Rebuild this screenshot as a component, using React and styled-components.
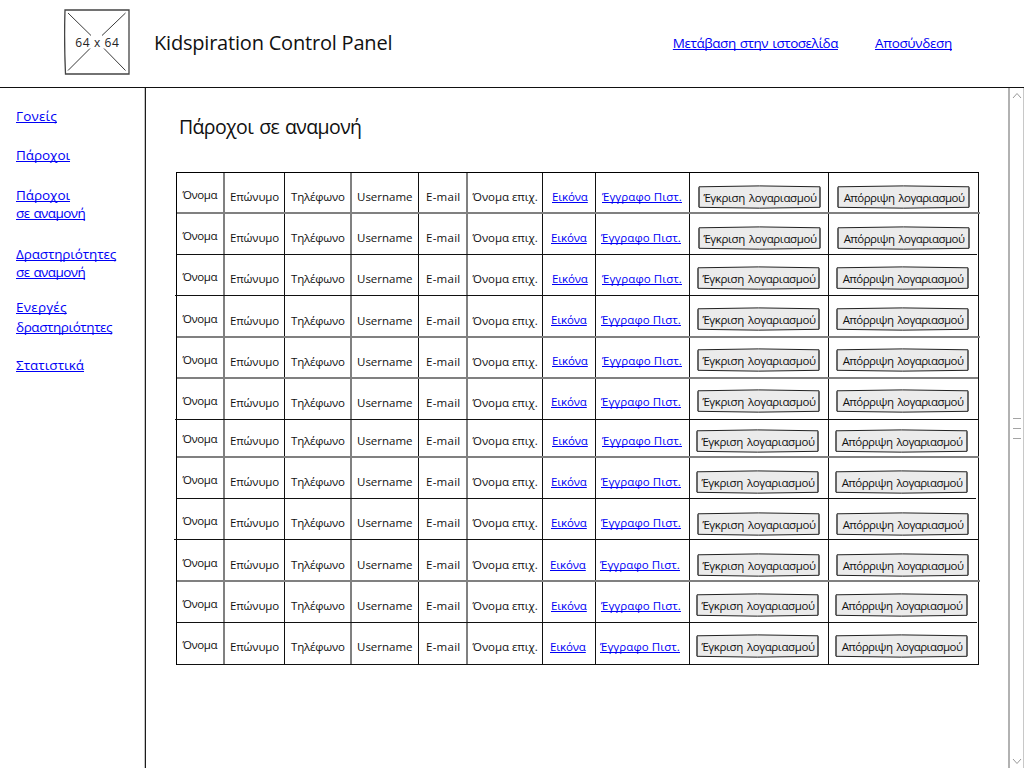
import React from 'react';
import styled, { createGlobalStyle } from 'styled-components';

const GlobalStyle = createGlobalStyle`
  * { box-sizing: border-box; }
  html, body { margin: 0; background: #fff; overflow: hidden; }
  body { font-family: "Open Sans", "Noto Sans", sans-serif; color: #111; }
`;

const Page = styled.div`
  width: 1024px;
  height: 768px;
  display: flex;
  flex-direction: column;
`;

const Header = styled.header`
  height: 88px;
  flex: none;
  display: flex;
  align-items: flex-start;
  padding: 9px 72px 0 64px;
  border-bottom: 1px solid #111;
`;

const Logo = styled.svg`
  flex: none;
  width: 66px;
  height: 66px;
`;

const Title = styled.h1`
  margin: 20px 0 0 24px;
  font-size: 20px;
  line-height: 28px;
  font-weight: 400;
  letter-spacing: -0.2px;
  white-space: nowrap;
`;

const TopLinks = styled.nav`
  display: flex;
  gap: 37px;
  margin: 25px 0 0 auto;
`;

const Link = styled.a`
  color: #0000f5;
  text-decoration: underline;
  text-decoration-thickness: 1px;
  text-underline-offset: 1px;
  text-decoration-skip-ink: none;
  white-space: nowrap;
  letter-spacing: ${(p) => p.$track || 0}px;
`;

const MenuLink = styled(Link)`
  font-size: 13.5px;
  line-height: 18px;
  word-spacing: 1px;
`;

const Body = styled.div`
  flex: 1;
  min-height: 0;
  display: flex;
`;

const Sidebar = styled.aside`
  width: 146px;
  flex: none;
  padding: 19px 0 0 16px;
  border-right: 1px solid #1c1c1c;
  box-shadow: inset -1px 0 0 #c4c4c4;
`;

const MenuItem = styled.div`
  display: flex;
  flex-direction: column;
  align-items: flex-start;
  margin-bottom: ${(p) => p.$gap}px;

  ${MenuLink} { line-height: ${(p) => p.$line || 18}px; }
`;

const Main = styled.main`
  flex: 1;
  padding: 26px 0 0 30px;
`;

const Heading = styled.h2`
  margin: 0 0 32px 3px;
  font-size: 19.5px;
  line-height: 26px;
  font-weight: 400;
  letter-spacing: -0.62px;
  word-spacing: 1.5px;
`;

const Table = styled.div`
  width: 803px;
  border: solid #000;
  border-width: 1px 0 0 1px;
`;

const Row = styled.div`
  position: relative;
  display: grid;
  grid-template-columns: 48px 60px 67px 67px 49px 75px 53px 94px 139px 150px;
  height: ${(p) => p.$height}px;

  &::after {
    content: "";
    position: absolute;
    bottom: 0;
    left: ${(p) => -p.$left}px;
    right: ${(p) => -p.$right}px;
    height: ${(p) => (p.$soft ? 2 : 1)}px;
    background: ${(p) => (p.$soft ? '#808080' : '#111')};
  }
`;

const Cell = styled.div`
  display: flex;
  align-items: flex-start;
  padding: ${(p) => p.$top}px 0 0 ${(p) => p.$left}px;
  border-right: ${(p) => (p.$soft ? '2px solid #808080' : '1px solid #111')};
  font-size: 11.5px;
  line-height: 16px;
  letter-spacing: ${(p) => p.$track || 0}px;
  white-space: nowrap;
  min-width: 0;
`;

const SketchButton = styled.button`
  position: relative;
  flex: none;
  width: ${(p) => p.$width}px;
  height: 24px;
  padding: 2px 0 0 1px;
  border: 0;
  background: none;
  color: #111;
  font: 11.5px/18px "Open Sans", "Noto Sans", sans-serif;
  letter-spacing: ${(p) => p.$track}px;
  word-spacing: 1.5px;
  text-align: center;
  white-space: nowrap;

  svg { position: absolute; inset: 0; }
  span { position: relative; }
`;

const Scrollbar = styled.div`
  width: 16px;
  flex: none;
  display: flex;
  flex-direction: column;
  justify-content: space-between;
  align-items: center;
  padding: 4px 0 3px;
  border-left: 2px solid #b2b2b2;
  border-right: 1px solid #c8c8c8;
`;

const Arrow = styled.svg`
  width: 10px;
  height: 7px;
`;

const Grip = styled.div`
  display: flex;
  flex-direction: column;
  gap: 9px;
  width: 8px;
  i { height: 1px; background: #a4a4a4; }
`;

const columns = [
  { text: 'Όνομα', left: 5.5, track: -0.4, lift: 2, soft: true },
  { text: 'Επώνυμο', left: 5, track: -0.15 },
  { text: 'Τηλέφωνο', left: 6, track: -0.2, soft: true },
  { text: 'Username', left: 5, track: 0 },
  { text: 'E-mail', left: 7, track: 0.25, soft: true },
  { text: 'Όνομα επιχ.', left: 4.5, track: -0.05 },
  { text: 'Εικόνα', left: 9, track: -0.12, link: true },
  { text: 'Έγγραφο Πιστ.', left: 6, track: 0.08, link: true },
  { text: 'Έγκριση λογαριασμού', left: 8, track: -0.39, button: 123 },
  { text: 'Απόρριψη λογαριασμού', left: 8, track: -0.54, button: 133 },
];

const rows = [
  { h: 41, text: 16, btn: 12, link: 0, shift: 0, soft: true, left: 0, right: 1 },
  { h: 41, text: 16, btn: 12, link: -1, shift: 0, left: 0, right: -2 },
  { h: 41, text: 16, btn: 11, link: 0, shift: -1, left: 2, right: 0 },
  { h: 42, text: 17, raise: 1, btn: 11, link: -1, shift: -1, soft: true, left: 0, right: 1 },
  { h: 41, text: 16, raise: 1, btn: 10, link: 0, shift: -1, soft: true, left: 0, right: -1 },
  { h: 41, text: 16, raise: 1, btn: 10, link: -1, shift: -1, left: 2, right: 0 },
  { h: 38, text: 13, btn: 9, link: 0, shift: -2, soft: true, left: 0, right: 0 },
  { h: 41, text: 16, btn: 12, link: -1, shift: -2, left: 0, right: -3 },
  { h: 41, text: 16, btn: 13, link: -1, shift: -1, left: 3, right: 0 },
  { h: 42, text: 17, btn: 13, link: -2, shift: -1, soft: true, left: 0, right: 1 },
  { h: 41, text: 16, btn: 11, link: -1, shift: -2, left: 0, right: -2 },
  { h: 42, text: 16, btn: 11, link: -2, shift: -2, left: 0, right: 0 },
];

const menu = [
  { gap: 21, lines: [['Γονείς', 0.16]] },
  { gap: 22, lines: [['Πάροχοι', -0.05]] },
  { gap: 23, lines: [['Πάροχοι', -0.05], ['σε αναμονή', -0.6]] },
  { gap: 16, lines: [['Δραστηριότητες', -0.13], ['σε αναμονή', -0.6]] },
  { gap: 19, line: 20, lines: [['Ενεργές', 0.22], ['δραστηριότητες', -0.43]] },
  { gap: 0, lines: [['Στατιστικά', 0.02]] },
];

function ActionButton({ width: w, track, children }) {
  return (
    <SketchButton $width={w} $track={track}>
      <svg width={w} height="24" fill="none">
        <path
          d={`M1 1.8 Q${w / 2} 0 ${w - 1} 1.8 L${w - 1} 22.3 Q${w / 2} 24 1 22.3 Z`}
          fill="#ebebeb"
          stroke="#222"
        />
        <path d={`M1 2.5V22M${w - 1} 2.5V22`} stroke="#555" strokeWidth="1.3" />
      </svg>
      <span>{children}</span>
    </SketchButton>
  );
}

function TableCell({ column: c, row: r }) {
  const top = c.button ? r.btn : r.text - (c.lift || 0) - (c.link ? r.raise || 0 : 0);
  const left = c.left + (c.link ? r.link : 0) + (c.button ? r.shift : 0);
  return (
    <Cell $top={top} $left={left} $soft={c.soft} $track={c.track}>
      {c.button ? (
        <ActionButton width={c.button} track={c.track}>{c.text}</ActionButton>
      ) : c.link ? (
        <Link $track={c.track}>{c.text}</Link>
      ) : (
        c.text
      )}
    </Cell>
  );
}

export default function App() {
  return (
    <Page>
      <GlobalStyle />
      <Header>
        <Logo viewBox="0 0 66 66" fill="none">
          <path d="M1 1H65V65H1.5Q0 32 1 1Z" stroke="#444" strokeWidth="1.3" />
          <path d="M4 4L27 26.5M61.5 4L38 26.5M4 61.5L26 39.5M61.5 61.5L40 39.5" stroke="#222" strokeWidth="0.9" />
          <text x="11.3" y="38" fontSize="12" textLength="43.5" fill="#222">64 x 64</text>
        </Logo>
        <Title>Kidspiration Control Panel</Title>
        <TopLinks>
          <MenuLink $track={-0.45}>Μετάβαση στην ιστοσελίδα</MenuLink>
          <MenuLink $track={-0.33}>Αποσύνδεση</MenuLink>
        </TopLinks>
      </Header>
      <Body>
        <Sidebar>
          {menu.map((item, i) => (
            <MenuItem key={i} $gap={item.gap} $line={item.line}>
              {item.lines.map(([text, track]) => (
                <MenuLink key={text} $track={track}>{text}</MenuLink>
              ))}
            </MenuItem>
          ))}
        </Sidebar>
        <Main>
          <Heading>Πάροχοι σε αναμονή</Heading>
          <Table>
            {rows.map((r, i) => (
              <Row key={i} $height={r.h} $soft={r.soft} $left={r.left} $right={r.right}>
                {columns.map((c) => (
                  <TableCell key={c.text} column={c} row={r} />
                ))}
              </Row>
            ))}
          </Table>
        </Main>
        <Scrollbar>
          <Arrow fill="none" stroke="#999"><path d="M1 6L5 1.5L9 6" /></Arrow>
          <Grip><i /><i /><i /></Grip>
          <Arrow fill="none" stroke="#999"><path d="M1 1L5 5.5L9 1" /></Arrow>
        </Scrollbar>
      </Body>
    </Page>
  );
}
